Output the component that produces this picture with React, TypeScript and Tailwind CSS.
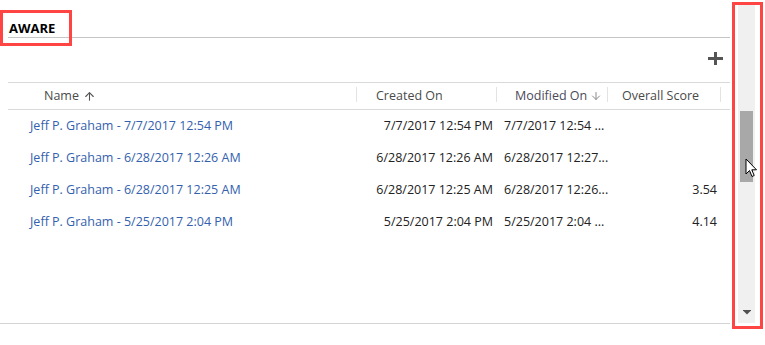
import { ArrowUp, ArrowDown } from 'lucide-react';

const rows = [
  { name: 'Jeff P. Graham - 7/7/2017 12:54 PM', created: '7/7/2017 12:54 PM', modified: '7/7/2017 12:54 ...', score: '' },
  { name: 'Jeff P. Graham - 6/28/2017 12:26 AM', created: '6/28/2017 12:26 AM', modified: '6/28/2017 12:27...', score: '' },
  { name: 'Jeff P. Graham - 6/28/2017 12:25 AM', created: '6/28/2017 12:25 AM', modified: '6/28/2017 12:26...', score: '3.54' },
  { name: 'Jeff P. Graham - 5/25/2017 2:04 PM', created: '5/25/2017 2:04 PM', modified: '5/25/2017 2:04 ...', score: '4.14' },
];

function Sep() {
  return <span className="absolute right-0 top-[4px] h-[15px] w-px bg-[#e3e3e3]" />;
}

export default function App() {
  return (
    <div className="relative flex h-[345px] w-[765px] overflow-hidden bg-white font-['Open_Sans',sans-serif] text-[12.5px]">
      {/* Main panel */}
      <div className="flex h-[324px] w-[730px] flex-none flex-col border-b border-[#d4d4d4]">
        {/* Title */}
        <div className="ml-2 flex h-[38px] items-end border-b border-[#c6c6c6] pb-[1px] pl-px">
          <span className="text-[13px] font-bold leading-[16px] text-black">AWARE</span>
        </div>

        {/* Toolbar */}
        <div className="flex h-[44px] items-center justify-end pr-[7px]">
          <svg width="15" height="13" viewBox="0 0 15 13" className="mt-[-3px]">
            <rect x="6" y="0" width="3" height="13" fill="#555" />
            <rect x="0" y="5" width="15" height="3" fill="#555" />
          </svg>
        </div>

        {/* Header */}
        <div className="ml-2 flex h-[28px] border-y border-[#d9d9d9] text-[#4a4a4a]">
          <div className="relative flex w-[349px] items-center pl-[36px]">
            Name
            <ArrowUp size={13} strokeWidth={2} className="ml-[4px] text-[#555]" />
            <Sep />
          </div>
          <div className="relative flex w-[140px] items-center pl-[19px]">
            Created On
            <Sep />
          </div>
          <div className="relative flex w-[111px] items-center whitespace-nowrap pl-[18px] text-[#4a4a5a]">
            Modified On
            <ArrowDown size={12} strokeWidth={2} className="ml-[3px] text-[#8a8a8a]" />
            <Sep />
          </div>
          <div className="relative flex w-[113px] items-center whitespace-nowrap pl-[14px]">
            Overall Score
            <Sep />
          </div>
        </div>

        {/* Rows */}
        <div className="ml-2 flex flex-col">
          {rows.map((r) => (
            <div key={r.name} className="flex h-[32px] items-center whitespace-nowrap text-[#222]">
              <div className="w-[349px] pl-[22px] text-[#3461ad]">{r.name}</div>
              <div className="w-[140px] pr-[4px] text-right">{r.created}</div>
              <div className="w-[111px] pl-[7px]">{r.modified}</div>
              <div className="w-[113px] pr-[4px] text-right">{r.score}</div>
            </div>
          ))}
        </div>
      </div>

      {/* Scrollbar */}
      <div className="flex w-[35px] flex-none pl-[8px] pt-[3px]">
        <div className="relative flex h-[320px] w-[17px] flex-col items-center bg-[#f0f0f0]">
          <div className="mt-[108px] h-[71px] w-[13px] bg-[#a8a8a8]" />
          <svg width="8" height="5" viewBox="0 0 8 5" className="absolute bottom-[8px] left-[5px]">
            <rect x="0" y="0" width="8" height="1" fill="#505050" />
            <polygon points="0.5,1 7.5,1 4,4.5" fill="#505050" />
          </svg>
        </div>
      </div>

      {/* Annotation boxes */}
      <div className="pointer-events-none absolute left-0 top-[10px] h-[36px] w-[72px] border-[3px] border-[#ff4444]" />
      <div className="pointer-events-none absolute left-[732px] top-[2px] h-[327px] w-[31px] border-[3px] border-[#ff4444]" />

      {/* Mouse cursor */}
      <svg width="13" height="20" viewBox="0 0 13 20" className="absolute left-[745px] top-[158px]">
        <path d="M1 1 L1 16 L4.5 12.5 L7 18.5 L9.2 17.5 L6.8 11.8 L11.5 11.8 Z" fill="#fff" stroke="#000" strokeWidth="1" strokeLinejoin="round" />
      </svg>
    </div>
  );
}
